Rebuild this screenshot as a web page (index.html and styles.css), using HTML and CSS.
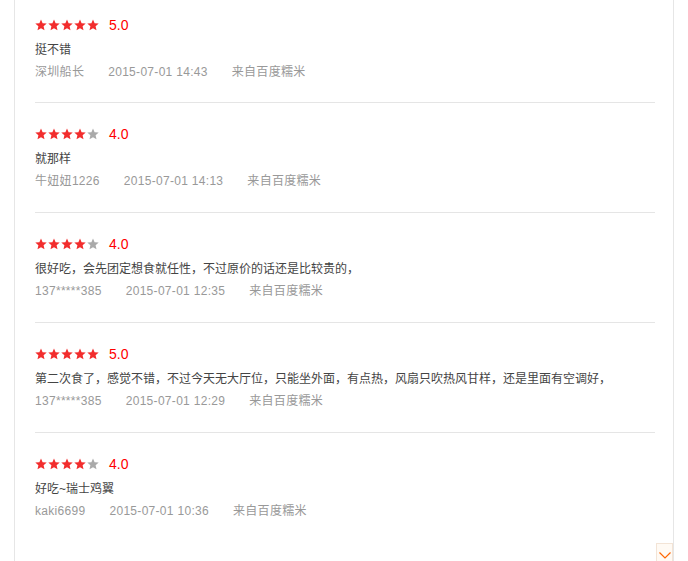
FILE: index.html
```html
<!DOCTYPE html>
<html lang="zh-CN">
<head>
<meta charset="UTF-8">
<meta name="viewport" content="width=device-width, initial-scale=1.0">
<title>用户评论</title>
<link rel="stylesheet" href="styles.css">
</head>
<body>
  <div class="comments">
    <ul class="comment-list">
      <li class="comment">
        <div class="score">
          <span class="stars" data-score="5"></span>
          <span class="rate">5.0</span>
        </div>
        <p class="content">挺不错</p>
        <p class="meta"><span>深圳船长</span><span>2015-07-01 14:43</span><span>来自百度糯米</span></p>
      </li>
      <li class="comment">
        <div class="score">
          <span class="stars" data-score="4"></span>
          <span class="rate">4.0</span>
        </div>
        <p class="content">就那样</p>
        <p class="meta"><span>牛妞妞1226</span><span>2015-07-01 14:13</span><span>来自百度糯米</span></p>
      </li>
      <li class="comment">
        <div class="score">
          <span class="stars" data-score="4"></span>
          <span class="rate">4.0</span>
        </div>
        <p class="content">很好吃，会先团定想食就任性，不过原价的话还是比较贵的，</p>
        <p class="meta"><span>137*****385</span><span>2015-07-01 12:35</span><span>来自百度糯米</span></p>
      </li>
      <li class="comment">
        <div class="score">
          <span class="stars" data-score="5"></span>
          <span class="rate">5.0</span>
        </div>
        <p class="content">第二次食了，感觉不错，不过今天无大厅位，只能坐外面，有点热，风扇只吹热风甘样，还是里面有空调好，</p>
        <p class="meta"><span>137*****385</span><span>2015-07-01 12:29</span><span>来自百度糯米</span></p>
      </li>
      <li class="comment">
        <div class="score">
          <span class="stars" data-score="4"></span>
          <span class="rate">4.0</span>
        </div>
        <p class="content">好吃~瑞士鸡翼</p>
        <p class="meta"><span>kaki6699</span><span>2015-07-01 10:36</span><span>来自百度糯米</span></p>
      </li>
    </ul>
  </div>

  <a class="to-bottom" href="#">
    <svg width="12" height="7" viewBox="0 0 12 7"><polyline points="0.5,0.5 6,6 11.5,0.5" fill="none" stroke="#f60" stroke-width="1.2"/></svg>
  </a>

<script>
  const starSvg = (on) =>
    `<svg class="star" width="12" height="12" viewBox="0 0 12 12"><polygon fill="${on ? '#f22d2d' : '#aaa'}" points="6,0.6 7.6,4.3 11.7,4.6 8.6,7.3 9.5,11.3 6,9.2 2.5,11.3 3.4,7.3 0.3,4.6 4.4,4.3"/></svg>`;

  document.querySelectorAll('.stars').forEach(function (el) {
    const score = parseInt(el.dataset.score, 10);
    let html = '';
    for (let i = 0; i < 5; i++) {
      html += starSvg(i < score);
    }
    el.innerHTML = html;
  });
</script>
</body>
</html>
```

FILE: styles.css
```css
body {
  margin: 0;
  font-family: 'Liberation Sans', 'Noto Sans CJK SC', sans-serif;
  font-size: 12px;
  background-color: #fff;
}

.comments {
  margin: 0 14px;
  min-height: 561px;
  padding: 0 18px 0 20px;
  border-left: 1px solid #e6e6e6;
  border-right: 1px solid #e6e6e6;
}

.comment-list {
  list-style: none;
  margin: 0;
  padding: 0;
}

.comment {
  padding: 21px 0 20px;
  border-bottom: 1px solid #e5e5e5;
}

.comment:first-child {
  padding-top: 15px;
  padding-bottom: 19px;
}

.comment:last-child {
  border-bottom: none;
}

.score {
  display: flex;
  align-items: center;
  height: 20px;
}

.stars {
  display: flex;
  gap: 1px;
}

.star {
  display: block;
}

.rate {
  margin-left: 10px;
  font-size: 14px;
  color: #f00;
}

.content {
  margin: 4px 0 0 0;
  line-height: 22px;
  color: #444;
}

.meta {
  margin: 0;
  line-height: 22px;
  color: #999;
  letter-spacing: 0.3px;
}

.meta span {
  margin-right: 24px;
}

.to-bottom {
  position: fixed;
  right: 15px;
  top: 543px;
  width: 17px;
  height: 20px;
  display: flex;
  justify-content: center;
  padding-top: 8px;
  box-sizing: border-box;
  background-color: #fffaf4;
  border: 1px solid #f3e4d6;
  border-bottom: none;
}
```
